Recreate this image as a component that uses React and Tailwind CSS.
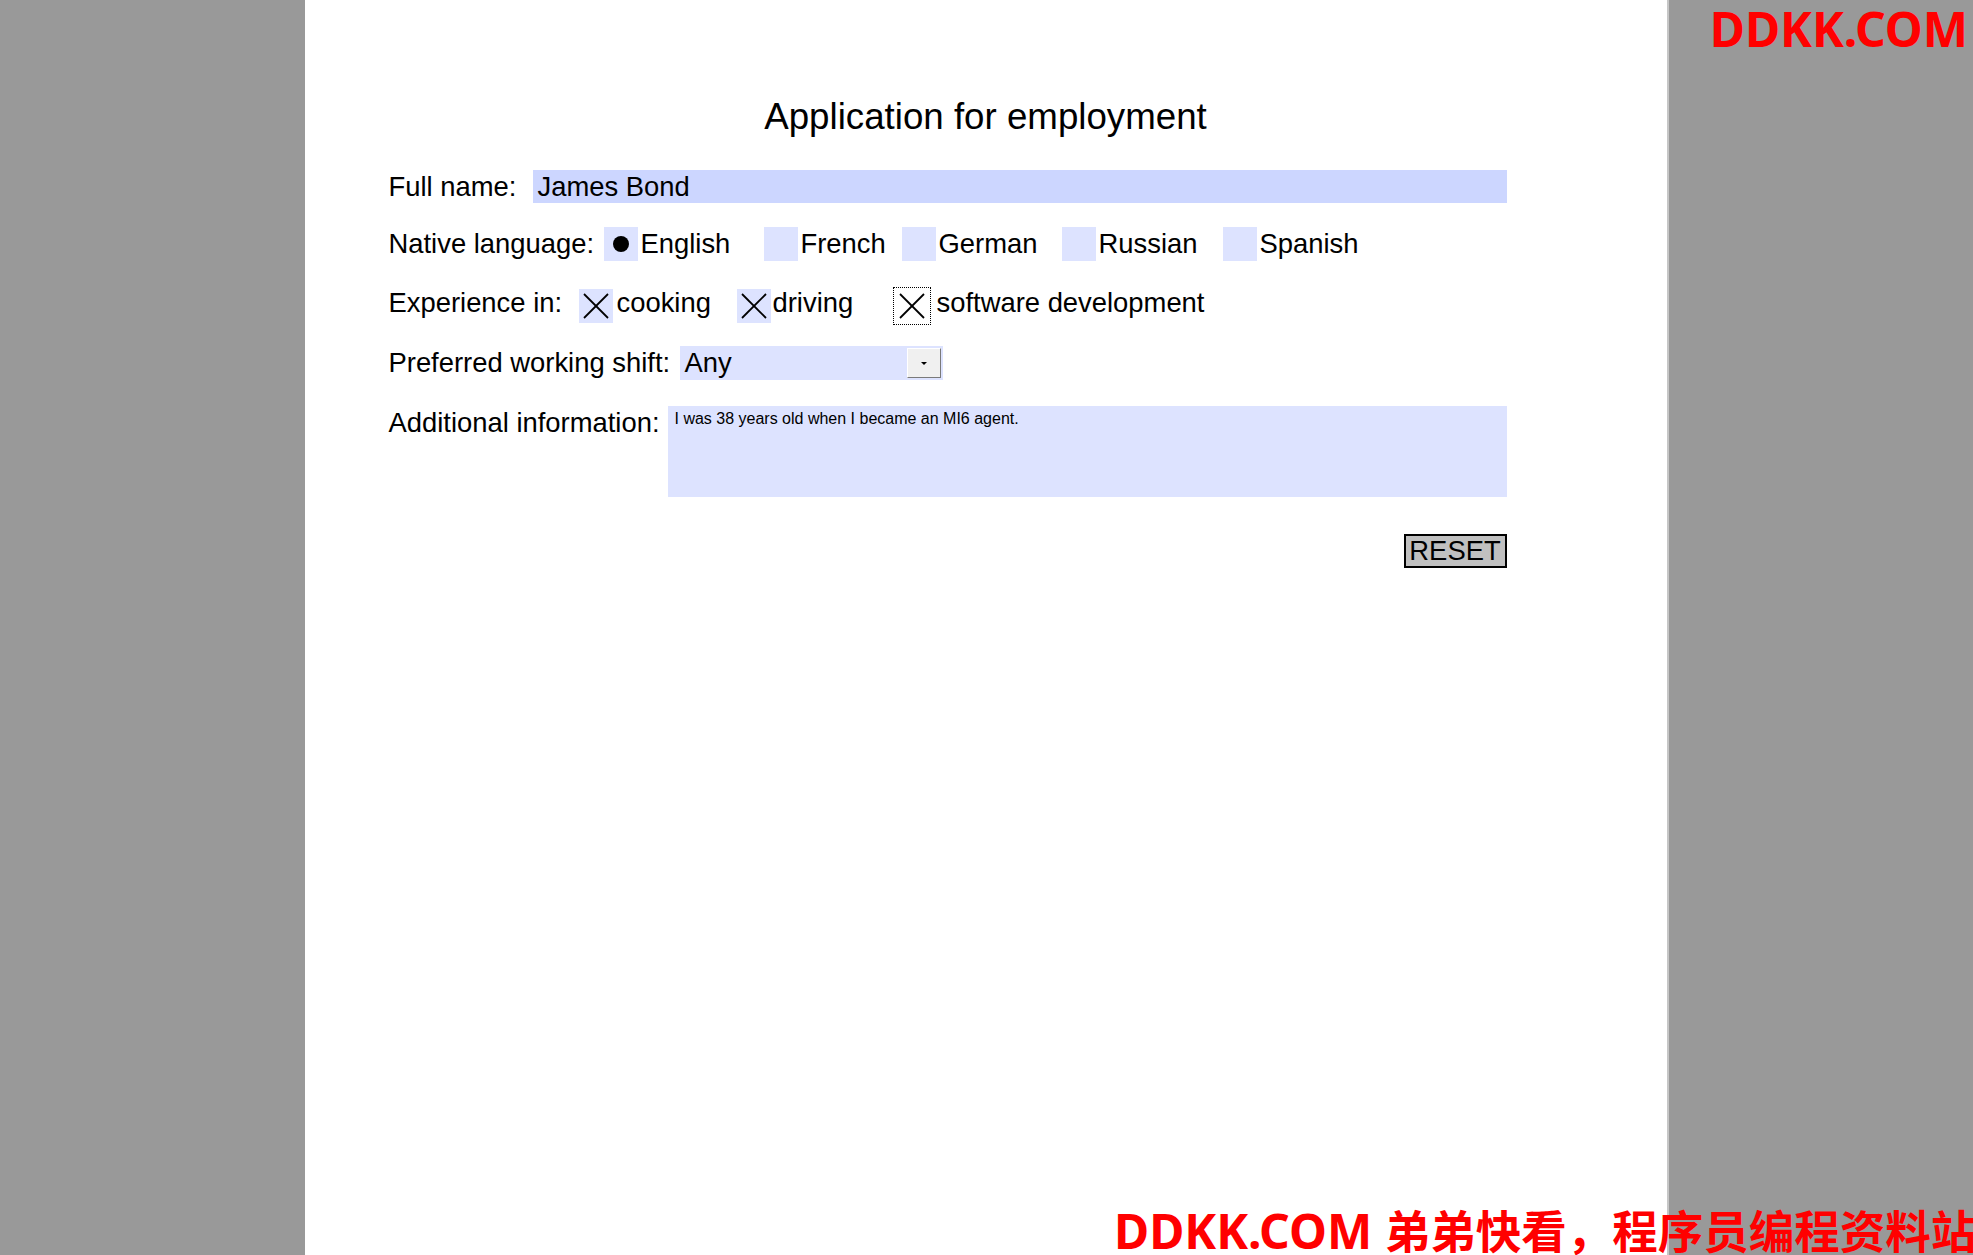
function XMark() {
  return (
    <svg width="34" height="34" viewBox="0 0 34 34" className="block">
      <line x1="5" y1="5" x2="29" y2="29" stroke="#000" strokeWidth="1.8" />
      <line x1="29" y1="5" x2="5" y2="29" stroke="#000" strokeWidth="1.8" />
    </svg>
  );
}

function Radio({ label, checked, width }) {
  return (
    <div className={`flex items-center gap-[3px] ${width}`}>
      <div className="w-[34px] h-[34px] bg-[#dde3ff] flex items-center justify-center shrink-0">
        {checked && <div className="w-[16px] h-[16px] rounded-full bg-black" />}
      </div>
      <span>{label}</span>
    </div>
  );
}

export default function App() {
  return (
    <div className="relative h-[1255px] w-[1973px] overflow-hidden bg-[#999999] flex justify-center font-['Liberation_Sans',Arial,sans-serif] text-black">
      <div className="w-[1364px] h-full bg-white border-r-2 border-[#c6c6c6] flex flex-col">
        <h1 className="pt-[96px] text-center text-[36.7px] leading-[42px] font-normal">
          Application for employment
        </h1>

        <div className="ml-[84px] w-[1118px] mt-[32px] flex flex-col text-[27.4px]">
          {/* Full name */}
          <div className="flex items-center h-[33px]">
            <div className="w-[144px] leading-[33px]">Full name:</div>
            <div className="flex-1 h-[33px] bg-[#ccd6ff] pl-[5px] leading-[33px]">James Bond</div>
          </div>

          {/* Native language */}
          <div className="flex items-center h-[34px] mt-[24px]">
            <div className="w-[215px] leading-[34px]">Native language:</div>
            <Radio label="English" checked width="w-[160px]" />
            <Radio label="French" width="w-[138px]" />
            <Radio label="German" width="w-[160px]" />
            <Radio label="Russian" width="w-[161px]" />
            <Radio label="Spanish" width="" />
          </div>

          {/* Experience */}
          <div className="flex items-center h-[34px] mt-[28px]">
            <div className="w-[190px] leading-[34px] mb-[7px]">Experience in:</div>
            <div className="flex items-center gap-[4px] w-[158px]">
              <div className="w-[34px] h-[34px] bg-[#dde3ff] shrink-0"><XMark /></div>
              <span className="mb-[7px]">cooking</span>
            </div>
            <div className="flex items-center gap-[2px] w-[158px]">
              <div className="w-[34px] h-[34px] bg-[#dde3ff] shrink-0"><XMark /></div>
              <span className="mb-[7px]">driving</span>
            </div>
            <div className="flex items-center gap-[8px]">
              <div className="w-[34px] h-[34px] bg-white shrink-0 outline-1 outline-dotted outline-black outline-offset-1"><XMark /></div>
              <span className="mb-[7px]">software development</span>
            </div>
          </div>

          {/* Shift */}
          <div className="flex items-center h-[34px] mt-[23px]">
            <div className="w-[291px] leading-[34px]">Preferred working shift:</div>
            <div className="w-[263px] h-[34px] bg-[#dde3ff] flex items-center">
              <span className="pl-[5px] leading-[34px]">Any</span>
              <div className="ml-auto mr-[2px] w-[34px] h-[30px] bg-[#f0f0f0] border border-t-white border-l-white border-r-[#7a7a7a] border-b-[#7a7a7a] flex items-center justify-center">
                <div className="w-0 h-0 border-l-[3px] border-r-[3px] border-t-[3px] border-l-transparent border-r-transparent border-t-black" />
              </div>
            </div>
          </div>

          {/* Additional */}
          <div className="flex items-start mt-[26px]">
            <div className="w-[279px] leading-[34px]">Additional information:</div>
            <div className="flex-1 h-[91px] bg-[#dde3ff] pl-[7px] pt-[4px] text-[16px] leading-[18px]">
              I was 38 years old when I became an MI6 agent.
            </div>
          </div>

          {/* Reset */}
          <div className="flex justify-end mt-[37px]">
            <div className="w-[103px] h-[34px] border-2 border-black bg-[#c0c0c0] text-center leading-[30px]">
              RESET
            </div>
          </div>
        </div>
      </div>

      <div className="absolute top-[5px] right-[5px] text-[48px] leading-[48px] font-bold text-[#ff0000] font-['Noto_Sans',sans-serif] whitespace-nowrap">
        DDKK.COM
      </div>
      <div className="absolute top-[1205px] left-[1114px] leading-[48px] font-bold text-[#ff0000] font-['Noto_Sans','Noto_Sans_CJK_SC',sans-serif] whitespace-nowrap">
        <span className="text-[48px]">DDKK.COM </span>
        <span className="text-[45.5px] font-['Noto_Sans_CJK_SC',sans-serif]">弟弟快看，程序员编程资料站</span>
      </div>
    </div>
  );
}
